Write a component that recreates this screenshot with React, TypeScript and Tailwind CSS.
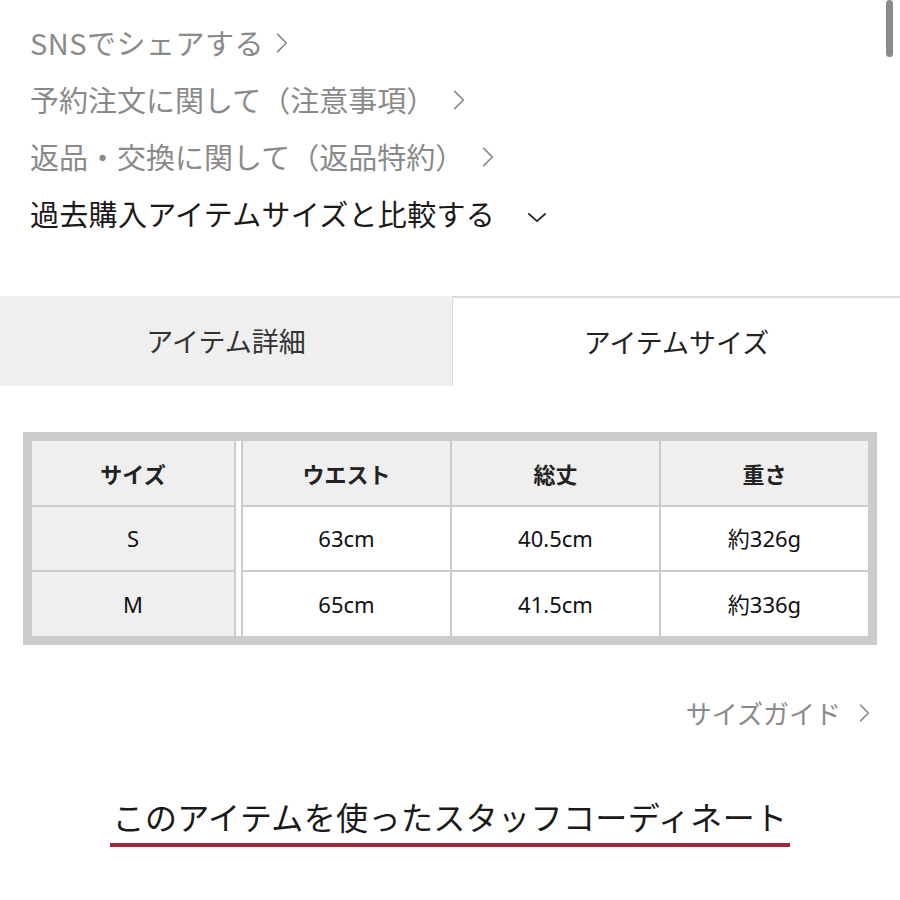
import React from "react";

const jp = { fontFamily: '"Noto Sans CJK JP", "Noto Sans", sans-serif' };
const body = { fontFamily: '"Noto Sans", "Noto Sans CJK JP", sans-serif' };

function ChevronRight({ className = "" }: { className?: string }) {
  return (
    <svg viewBox="0 0 14 24" className={className} fill="none" stroke="currentColor" strokeWidth="2" strokeLinecap="round" strokeLinejoin="round">
      <path d="M2 2 L12 12 L2 22" />
    </svg>
  );
}

function ChevronDown({ className = "" }: { className?: string }) {
  return (
    <svg viewBox="0 0 22 12" className={className} fill="none" stroke="currentColor" strokeWidth="2" strokeLinecap="round" strokeLinejoin="round">
      <path d="M2 2 L11 10 L20 2" />
    </svg>
  );
}

const head = "bg-[#efefef] flex items-center justify-center font-bold text-[22px] text-[#222]";
const cellG = "bg-[#efefef] flex items-center justify-center text-[22px] text-[#111]";
const cellW = "bg-white flex items-center justify-center text-[22px] text-[#111]";

export default function App() {
  return (
    <div className="relative w-[900px] h-[900px] bg-white overflow-hidden" style={jp}>
      <div className="absolute right-[7px] top-0 w-[7px] h-[57px] rounded-full bg-[#8a8a8a]" />

      <div className="pt-[14px] pl-[30px] flex flex-col">
        <div className="h-[57px] flex items-center text-[29px] text-[#8a8a8a] tracking-[0.5px]">
          <span>SNSでシェアする</span>
          <ChevronRight className="w-[12px] h-[22px] ml-[12px] text-[#8a8a8a]" />
        </div>
        <div className="h-[57px] flex items-center text-[29px] text-[#8a8a8a]">
          <span>予約注文に関して（注意事項）</span>
          <ChevronRight className="w-[12px] h-[22px] ml-[18px] text-[#8a8a8a]" />
        </div>
        <div className="h-[57px] flex items-center text-[29px] text-[#8a8a8a]">
          <span>返品・交換に関して（返品特約）</span>
          <ChevronRight className="w-[12px] h-[22px] ml-[18px] text-[#8a8a8a]" />
        </div>
        <div className="h-[57px] flex items-center text-[29px] text-[#1a1a1a] tracking-[0.3px]">
          <span>過去購入アイテムサイズと比較する</span>
          <ChevronDown className="w-[20px] h-[11px] ml-[32px] mt-[8px] text-[#222]" />
        </div>
      </div>

      <div className="mt-[54px] flex h-[90px]">
        <div className="w-[452px] bg-[#efefef] flex items-center justify-center text-[27px] text-[#333]">
          アイテム詳細
        </div>
        <div className="flex-1 bg-white border-t-2 border-l border-[#dcdcdc] flex items-center justify-center text-[27px] text-[#222]">
          アイテムサイズ
        </div>
      </div>

      <div className="mt-[46px] ml-[23px] w-[854px] bg-[#cccccc] p-[9px]" style={body}>
        <div className="grid grid-cols-[202px_5px_207px_207px_207px] grid-rows-[64px_63px_64px] gap-[2px]">
          <div className={head} style={jp}>サイズ</div>
          <div className="bg-white row-span-3 col-start-2 row-start-1" />
          <div className={head + " col-start-3 row-start-1"} style={jp}>ウエスト</div>
          <div className={head + " col-start-4 row-start-1"} style={jp}>総丈</div>
          <div className={head + " col-start-5 row-start-1"} style={jp}>重さ</div>

          <div className={cellG + " col-start-1 row-start-2"}>S</div>
          <div className={cellW + " col-start-3 row-start-2"}>63cm</div>
          <div className={cellW + " col-start-4 row-start-2"}>40.5cm</div>
          <div className={cellW + " col-start-5 row-start-2"}>約326g</div>

          <div className={cellG + " col-start-1 row-start-3"}>M</div>
          <div className={cellW + " col-start-3 row-start-3"}>65cm</div>
          <div className={cellW + " col-start-4 row-start-3"}>41.5cm</div>
          <div className={cellW + " col-start-5 row-start-3"}>約336g</div>
        </div>
      </div>

      <div className="mt-[48px] pr-[30px] flex justify-end items-center text-[26px] text-[#8a8a8a]">
        <span>サイズガイド</span>
        <ChevronRight className="w-[11px] h-[20px] ml-[18px] text-[#8a8a8a]" />
      </div>

      <div className="mt-[62px] flex justify-center">
        <div className="flex flex-col items-center">
          <div className="text-[32px] text-[#1a1a1a] leading-[44px] tracking-[0.4px]">このアイテムを使ったスタッフコーディネート</div>
          <div className="mt-[5px] h-[4px] w-[680px] bg-[#a3283f]" />
        </div>
      </div>
    </div>
  );
}
